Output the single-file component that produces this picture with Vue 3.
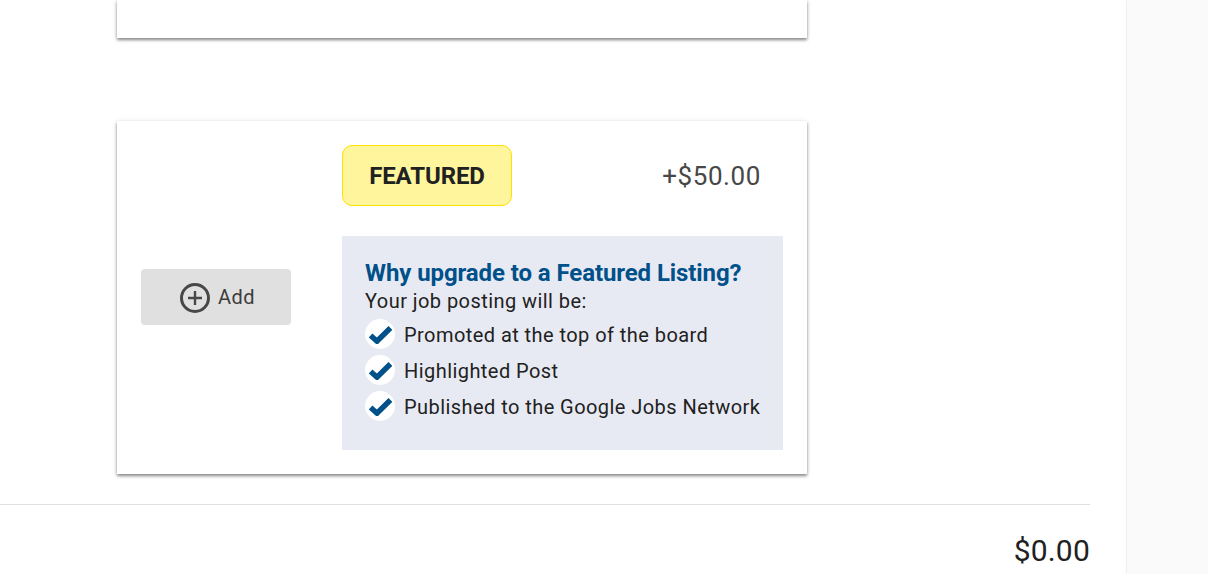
<script setup>
const benefits = [
  'Promoted at the top of the board',
  'Highlighted Post',
  'Published to the Google Jobs Network',
]
</script>

<template>
  <div class="page">
    <main class="main">
      <div class="card card-top"></div>
      <section class="card card-upgrade">
        <div class="action">
          <button class="add" type="button">
            <svg class="add-icon" viewBox="0 0 30 30" width="30" height="30" aria-hidden="true">
              <circle cx="15" cy="15" r="13.5" fill="none" stroke="#474747" stroke-width="3" />
              <path d="M15 8v14M8 15h14" fill="none" stroke="#474747" stroke-width="2.4" />
            </svg>
            <span>Add</span>
          </button>
        </div>
        <div class="details">
          <div class="head">
            <div class="badge">FEATURED</div>
            <div class="price">+$50.00</div>
          </div>
          <div class="info">
            <h3>Why upgrade to a Featured Listing?</h3>
            <p>Your job posting will be:</p>
            <ul>
              <li v-for="b in benefits" :key="b">
                <span class="tick">
                  <svg viewBox="0 0 24 19" width="24" height="19" aria-hidden="true">
                    <path d="M2.6 10.5 L9 16.2 L22.4 3" fill="none" stroke="#00508a" stroke-width="5.4" />
                  </svg>
                </span>
                {{ b }}
              </li>
            </ul>
          </div>
        </div>
      </section>
      <div class="total-row">
        <span class="total">$0.00</span>
      </div>
    </main>
    <aside class="side"></aside>
  </div>
</template>

<style scoped>
.page {
  display: flex;
  height: 574px;
  overflow: hidden;
  font-family: Roboto, "Liberation Sans", sans-serif;
  background: #fff;
}
.main {
  width: 1127px;
  flex: none;
}
.side {
  flex: 1;
  background: #fafafa;
  box-shadow: 0 0 2px rgba(0, 0, 0, 0.2);
}
.card {
  width: 690px;
  margin-left: 117px;
  background: #fff;
  box-shadow: 0 2px 3px rgba(0, 0, 0, 0.45), 0 0 6px rgba(0, 0, 0, 0.08);
}
.card-top {
  height: 38px;
  margin-bottom: 83px;
}
.card-upgrade {
  display: flex;
  box-sizing: border-box;
  height: 353px;
  padding: 24px;
}
.action {
  width: 201px;
  flex: none;
  display: flex;
  align-items: center;
  padding-bottom: 1px;
  box-sizing: border-box;
}
.add {
  width: 150px;
  height: 56px;
  border: 0;
  border-radius: 4px;
  background: #e0e0e0;
  color: #3d3d3d;
  font: 400 20px Roboto, sans-serif;
  letter-spacing: 0.5px;
  display: flex;
  align-items: center;
  justify-content: center;
  gap: 8px;
  padding: 2px 0 0 3px;
}
.add-icon {
  flex: none;
}
.add span {
  position: relative;
  top: -1px;
}
.details {
  width: 441px;
  flex: none;
}
.head {
  display: flex;
  justify-content: space-between;
  align-items: center;
  padding-right: 22px;
  margin-bottom: 30px;
}
.badge {
  box-sizing: border-box;
  width: 170px;
  height: 61px;
  border: 1px solid #ffe000;
  border-radius: 10px;
  background: #fff59d;
  color: #212121;
  font-size: 24px;
  font-weight: 700;
  letter-spacing: -0.1px;
  display: flex;
  align-items: center;
  justify-content: center;
}
.price {
  font-size: 26px;
  letter-spacing: 0.6px;
  color: #474747;
}
.info {
  box-sizing: border-box;
  height: 214px;
  padding: 23px 22px 0 23px;
  background: #e8eaf3;
  color: #212121;
  font-size: 20px;
  letter-spacing: 0.44px;
}
.info h3 {
  margin: 0;
  font-size: 24px;
  line-height: 28px;
  font-weight: 700;
  letter-spacing: -0.09px;
  color: #00508a;
  white-space: nowrap;
}
.info p {
  margin: 0 0 2px;
  line-height: 28px;
}
.info ul {
  margin: 0;
  padding: 0;
  list-style: none;
}
.info li {
  display: flex;
  align-items: center;
  gap: 9px;
  height: 36px;
  white-space: nowrap;
}
.tick {
  width: 30px;
  height: 30px;
  margin-bottom: 2px;
  border-radius: 50%;
  background: #fff;
  display: flex;
  align-items: center;
  justify-content: center;
  flex: none;
}
.total-row {
  width: 1090px;
  margin-top: 30px;
  border-top: 1px solid #e0e0e0;
  padding-top: 26px;
  display: flex;
  justify-content: flex-end;
}
.total {
  font-size: 30px;
  letter-spacing: 0.2px;
  line-height: 40px;
  color: #212121;
}
</style>
